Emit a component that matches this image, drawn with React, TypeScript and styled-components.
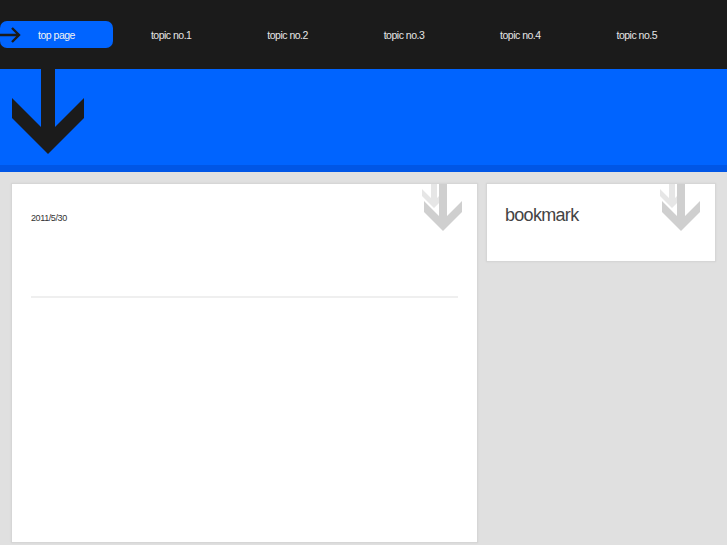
import React from "react"
import styled, { createGlobalStyle } from "styled-components"

const GlobalStyle = createGlobalStyle`
    html, body {
        margin:0;
        padding:0;
        background:#e0e0e0;
        font-family:"Liberation Sans", Arial, sans-serif;
    }
`

const topics = ["topic no.1", "topic no.2", "topic no.3", "topic no.4", "topic no.5"]

const NavArrow = () => (
    <svg width="22" height="16" viewBox="0 0 22 16">
        <path d="M0 8 H19 M12 1 L19 8 L12 15" fill="none" stroke="#1b1b1b" strokeWidth="2.4" />
    </svg>
)

const BigArrow = () => (
    <svg width="74" height="86" viewBox="0 0 74 86">
        <polygon points="29,0 43,0 43,58 72,29 72,49 36,85 0,49 0,29 29,58" fill="#1b1b1b" />
    </svg>
)

const CornerArrows = () => (
    <svg width="46" height="50" viewBox="0 0 46 50">
        <polygon points="13,0 19,0 19,14 28,5 28,12 16,24 4,12 4,5 13,14" fill="#e6e6e6" />
        <polygon points="21,0 29,0 29,32 44,17 44,28 25,47 6,28 6,17 21,32" fill="#cfcfcf" />
    </svg>
)

const App = () => {
    return(
        <>
            <GlobalStyle/>
            <Page>
                <Header>
                    <Nav>
                        <Current>
                            <Current_icon><NavArrow/></Current_icon>
                            top page
                        </Current>
                        {topics.map((topic) => (
                            <Nav_item key={topic}>{topic}</Nav_item>
                        ))}
                    </Nav>
                </Header>
                <Band>
                    <Band_arrow><BigArrow/></Band_arrow>
                </Band>
                <Content>
                    <Main_card>
                        <Decor><CornerArrows/></Decor>
                        <Date>2011/5/30</Date>
                        <Rule/>
                    </Main_card>
                    <Side_card>
                        <Decor><CornerArrows/></Decor>
                        <Side_title>bookmark</Side_title>
                    </Side_card>
                </Content>
            </Page>
        </>
    )
}

const Page = styled.div`
    display:flex;
    flex-direction:column;
    width:727px;
    height:545px;
    overflow:hidden;
`
const Header = styled.div`
    height:69px;
    background:#1b1b1b;
    display:flex;
    align-items:flex-start;
    padding-top:21px;
    box-sizing:border-box;
`
const Nav = styled.div`
    display:flex;
    height:27px;
`
const Current = styled.div`
    position:relative;
    width:113px;
    height:27px;
    border-radius:7px;
    background:#0064ff;
    color:#f2f2f2;
    font-size:10.5px;
    letter-spacing:-0.5px;
    display:flex;
    align-items:center;
    justify-content:center;
`
const Current_icon = styled.div`
    position:absolute;
    left:0;
    top:6px;
    display:flex;
`
const Nav_item = styled.div`
    width:116.4px;
    height:27px;
    color:#e6e6e6;
    font-size:10.5px;
    letter-spacing:-0.5px;
    display:flex;
    align-items:center;
    justify-content:center;
`
const Band = styled.div`
    position:relative;
    height:103px;
    background:#0064ff;
    border-bottom:7px solid #0056e6;
    box-sizing:border-box;
`
const Band_arrow = styled.div`
    position:absolute;
    left:12px;
    top:0;
    display:flex;
`
const Content = styled.div`
    display:flex;
    align-items:flex-start;
    gap:8px;
    padding:11px 11px 0 11px;
`
const Card = styled.div`
    position:relative;
    background:#fff;
    border:1px solid #d6d6d6;
    box-shadow:0 0 2px rgba(0,0,0,0.06);
    box-sizing:border-box;
    overflow:hidden;
`
const Main_card = styled(Card)`
    width:467px;
    height:360px;
    padding:28px 19px 0 19px;
`
const Side_card = styled(Card)`
    width:230px;
    height:79px;
    padding:20px 18px 0 18px;
`
const Decor = styled.div`
    position:absolute;
    top:0;
    right:13px;
    display:flex;
`
const Date = styled.div`
    font-size:9px;
    color:#333;
    letter-spacing:-0.4px;
    line-height:12px;
`
const Rule = styled.div`
    margin-top:72px;
    height:2px;
    background:#efefef;
`
const Side_title = styled.div`
    font-size:18px;
    color:#444;
    letter-spacing:-0.7px;
    line-height:22px;
`

export default App
